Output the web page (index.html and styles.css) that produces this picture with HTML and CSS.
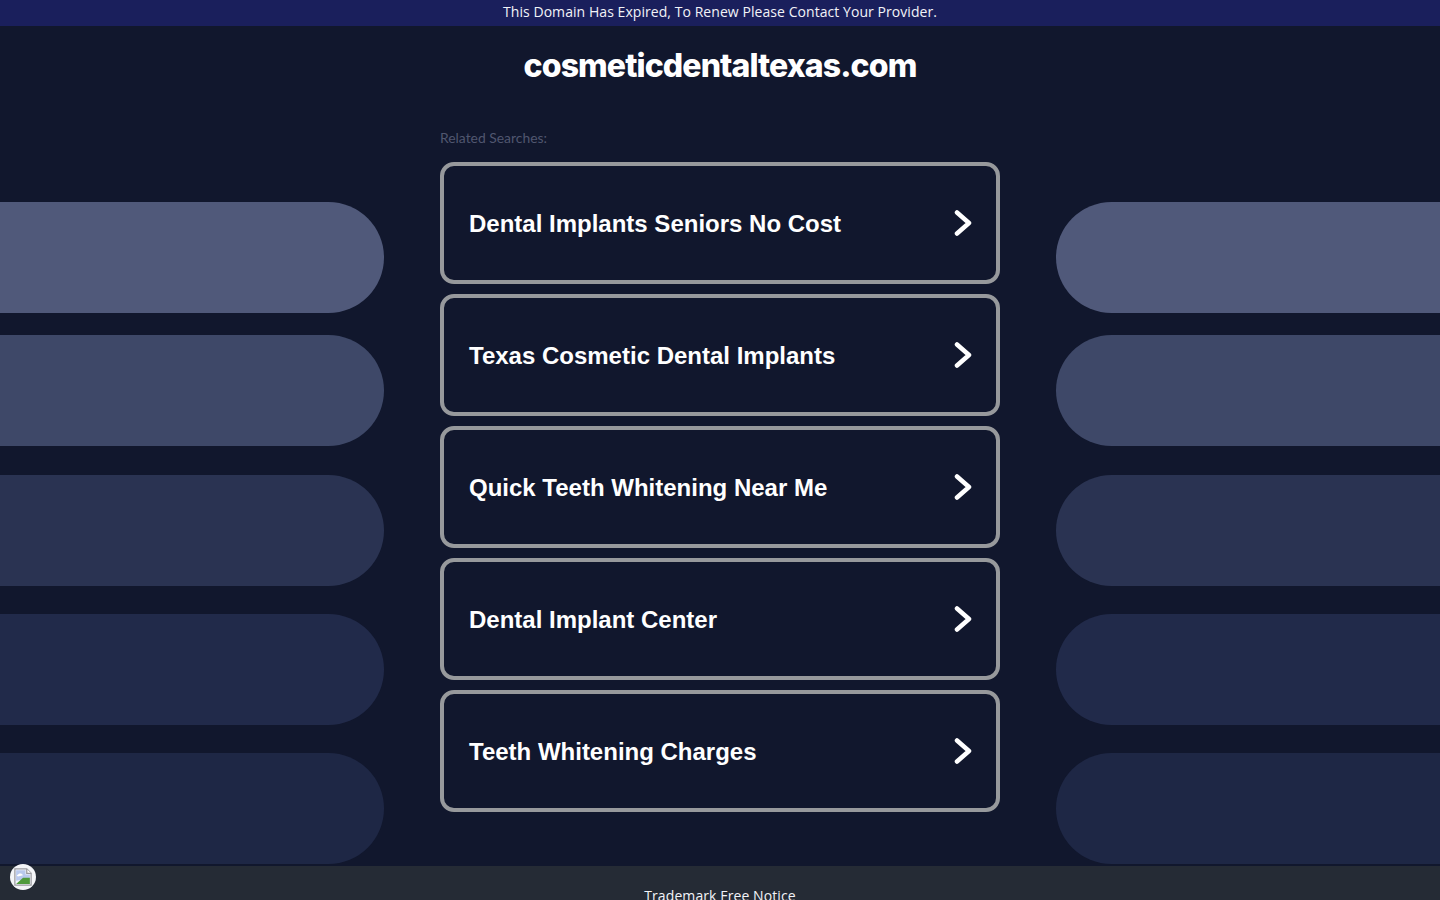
FILE: index.html
```html
<!DOCTYPE html>
<html lang="en">
<head>
<meta charset="utf-8">
<title>cosmeticdentaltexas.com</title>
<link rel="stylesheet" href="styles.css">
</head>
<body>
<div class="banner">This Domain Has Expired, To Renew Please Contact Your Provider.</div>
<div class="stage">
  <div class="side side-left">
    <div class="pill p1"></div><div class="pill p2"></div><div class="pill p3"></div><div class="pill p4"></div><div class="pill p5"></div>
  </div>
  <main class="center">
    <h1 class="domain">cosmeticdentaltexas.com</h1>
    <p class="related">Related Searches:</p>
    <div class="cards">
      <a class="card" href="#"><span class="label">Dental Implants Seniors No Cost</span><svg class="chev" viewBox="0 0 18 28"><path d="M3 3.5 L15 14 L3 24.5"/></svg></a>
      <a class="card" href="#"><span class="label">Texas Cosmetic Dental Implants</span><svg class="chev" viewBox="0 0 18 28"><path d="M3 3.5 L15 14 L3 24.5"/></svg></a>
      <a class="card" href="#"><span class="label">Quick Teeth Whitening Near Me</span><svg class="chev" viewBox="0 0 18 28"><path d="M3 3.5 L15 14 L3 24.5"/></svg></a>
      <a class="card" href="#"><span class="label">Dental Implant Center</span><svg class="chev" viewBox="0 0 18 28"><path d="M3 3.5 L15 14 L3 24.5"/></svg></a>
      <a class="card" href="#"><span class="label">Teeth Whitening Charges</span><svg class="chev" viewBox="0 0 18 28"><path d="M3 3.5 L15 14 L3 24.5"/></svg></a>
    </div>
  </main>
  <div class="side side-right">
    <div class="pill p1"></div><div class="pill p2"></div><div class="pill p3"></div><div class="pill p4"></div><div class="pill p5"></div>
  </div>
</div>
<footer class="footer">Trademark Free Notice</footer>
<div class="badge">
  <svg viewBox="0 0 16 16" class="broken">
    <path d="M1.5 1.5H11L14.5 5V14.5H1.5Z" fill="#f4f6fa" stroke="#9a9aa0" stroke-width="1"/>
    <path d="M11 1.5V5H14.5" fill="#fff" stroke="#9a9aa0" stroke-width="1"/>
    <path d="M2.5 2.5H10V6H13.5V9L2.5 11Z" fill="#b9c9ee"/>
    <path d="M2.5 13.5L8 8.5L13.5 8.5V13.5Z" fill="#4f9a3c"/>
    <path d="M3 7C5 4.5 7 5 8 6.5L4 7.5Z" fill="#fff"/>
  </svg>
</div>
</body>
</html>
```

FILE: styles.css
```css
html, body {
  margin: 0;
  padding: 0;
  height: 900px;
  overflow: hidden;
}
body {
  background: #11172d;
  font-family: "Lato", "Liberation Sans", sans-serif;
  color: #fff;
}
.banner {
  height: 26px;
  line-height: 24px;
  background: #1a1f5c;
  text-align: center;
  font-family: "Open Sans", sans-serif;
  font-size: 14px;
  letter-spacing: 0.06px;
  color: #f2f3f8;
}
.stage {
  display: grid;
  grid-template-columns: 384px 1fr 384px;
  height: 840px;
}
.side {
  display: flex;
  flex-direction: column;
  padding-top: 176px;
}
.pill {
  height: 111px;
  flex: none;
}
.side-left .pill { border-radius: 0 56px 56px 0; }
.side-right .pill { border-radius: 56px 0 0 56px; }
.p1 { background: #50597a; }
.p2 { background: #3e4868; margin-top: 22px; }
.p3 { background: #2a3352; margin-top: 29px; }
.p4 { background: #212a4a; margin-top: 28px; }
.p5 { background: #1e2745; margin-top: 28px; }
.center {
  padding: 0 56px;
}
.domain {
  margin: 0;
  padding-top: 20px;
  height: 48px;
  line-height: 40px;
  text-align: center;
  font-family: "Inter", sans-serif;
  font-size: 32px;
  letter-spacing: -0.9px;
  font-weight: 800;
  color: #fff;
}
.related {
  margin: 0;
  padding-top: 35px;
  height: 33px;
  line-height: 17px;
  font-family: "Lato", sans-serif;
  font-size: 13.9px;
  color: #50566f;
}
.cards {
  display: flex;
  flex-direction: column;
  gap: 10px;
}
.card {
  box-sizing: border-box;
  height: 122px;
  border: 4px solid #97999c;
  border-radius: 14px;
  padding: 0 25px;
  display: flex;
  align-items: center;
  justify-content: space-between;
  text-decoration: none;
  color: #fff;
  font-family: "Liberation Sans", sans-serif;
  font-weight: 700;
  font-size: 24px;
}
.label {
  margin-top: 2px;
}
.chev {
  width: 18px;
  height: 28px;
  margin-right: -1px;
  fill: none;
  stroke: #fff;
  stroke-width: 4.5;
  stroke-linecap: round;
  stroke-linejoin: round;
}
.footer {
  height: 33px;
  background: #252b35;
  text-align: center;
  font-family: "Open Sans", sans-serif;
  font-size: 14px;
  letter-spacing: 0.1px;
  color: #f2f3f8;
  padding-top: 21px;
  line-height: 18px;
}
.badge {
  position: fixed;
  left: 10px;
  top: 864px;
  width: 26px;
  height: 26px;
  border-radius: 50%;
  background: #f4f5f8;
  display: flex;
  align-items: center;
  justify-content: center;
}
.broken {
  width: 20px;
  height: 20px;
}
```
